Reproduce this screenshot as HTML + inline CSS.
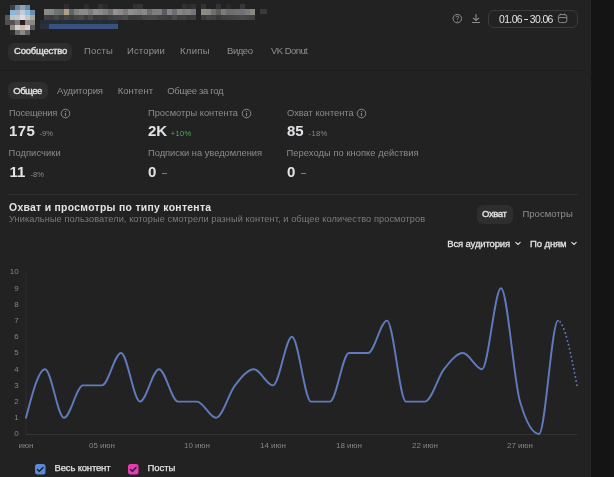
<!DOCTYPE html>
<html><head><meta charset="utf-8">
<style>
*{box-sizing:border-box;margin:0;padding:0}
body{will-change:transform}
html,body{width:614px;height:477px;overflow:hidden;background:#222222;font-family:"Liberation Sans",sans-serif;}
.abs{position:absolute;white-space:nowrap}
.strip{position:absolute;left:591px;top:0;width:23px;height:477px;background:#141414}
.sep{position:absolute;left:-10px;top:70px;width:601px;height:14px;border-top:1px solid #1d1d1d;border-right:1px solid #1d1d1d;border-top-right-radius:9px;-webkit-mask-image:linear-gradient(#000 40%,transparent)}
.edge{position:absolute;left:590px;top:0;width:1px;height:477px;background:#252525}
.pill{position:absolute;background:#2e2e2e;border-radius:6px}
.t1{font-size:10px;color:#e1e3e6;font-weight:700}
.tab{font-size:10px;color:#8f8f8f}
.lbl{font-size:9.3px;color:#8c8c8c}
.num{font-size:15px;color:#e1e3e6;font-weight:700}
.pct{font-size:7.5px;color:#8c8c8c;margin-top:1px}
</style></head><body>
<div class="strip"></div>
<div class="edge"></div>
<div class="sep"></div>
<div style="position:absolute;left:0;top:0;width:40px;height:40px;filter:blur(0.45px)"><div style="position:absolute;left:9.9px;top:5.0px;width:5.2px;height:5.2px;background:#3a4048"></div><div style="position:absolute;left:14.8px;top:5.0px;width:5.2px;height:5.2px;background:#6a84a0"></div><div style="position:absolute;left:19.7px;top:5.0px;width:5.2px;height:5.2px;background:#8ca4bc"></div><div style="position:absolute;left:24.6px;top:5.0px;width:5.2px;height:5.2px;background:#6888a8"></div><div style="position:absolute;left:9.9px;top:9.9px;width:5.2px;height:5.2px;background:#8cb8e0"></div><div style="position:absolute;left:14.8px;top:9.9px;width:5.2px;height:5.2px;background:#a0b0c0"></div><div style="position:absolute;left:19.7px;top:9.9px;width:5.2px;height:5.2px;background:#c8ccd0"></div><div style="position:absolute;left:24.6px;top:9.9px;width:5.2px;height:5.2px;background:#88c0e8"></div><div style="position:absolute;left:29.5px;top:9.9px;width:5.2px;height:5.2px;background:#6890b0"></div><div style="position:absolute;left:5.0px;top:14.8px;width:5.2px;height:5.2px;background:#585858"></div><div style="position:absolute;left:9.9px;top:14.8px;width:5.2px;height:5.2px;background:#b8c4cc"></div><div style="position:absolute;left:14.8px;top:14.8px;width:5.2px;height:5.2px;background:#c0c8d0"></div><div style="position:absolute;left:19.7px;top:14.8px;width:5.2px;height:5.2px;background:#dcdee0"></div><div style="position:absolute;left:24.6px;top:14.8px;width:5.2px;height:5.2px;background:#c4c8cc"></div><div style="position:absolute;left:29.5px;top:14.8px;width:5.2px;height:5.2px;background:#a8aaa8"></div><div style="position:absolute;left:5.0px;top:19.7px;width:5.2px;height:5.2px;background:#505050"></div><div style="position:absolute;left:9.9px;top:19.7px;width:5.2px;height:5.2px;background:#585050"></div><div style="position:absolute;left:14.8px;top:19.7px;width:5.2px;height:5.2px;background:#7a7878"></div><div style="position:absolute;left:19.7px;top:19.7px;width:5.2px;height:5.2px;background:#2a1a18"></div><div style="position:absolute;left:24.6px;top:19.7px;width:5.2px;height:5.2px;background:#8a8a8a"></div><div style="position:absolute;left:29.5px;top:19.7px;width:5.2px;height:5.2px;background:#888886"></div><div style="position:absolute;left:9.9px;top:24.6px;width:5.2px;height:5.2px;background:#8a8a8a"></div><div style="position:absolute;left:14.8px;top:24.6px;width:5.2px;height:5.2px;background:#d0d0d0"></div><div style="position:absolute;left:19.7px;top:24.6px;width:5.2px;height:5.2px;background:#d0b8a8"></div><div style="position:absolute;left:24.6px;top:24.6px;width:5.2px;height:5.2px;background:#d4d4d4"></div><div style="position:absolute;left:29.5px;top:24.6px;width:5.2px;height:5.2px;background:#5a5a5a"></div><div style="position:absolute;left:9.9px;top:29.5px;width:5.2px;height:5.2px;background:#2a2a2a"></div><div style="position:absolute;left:14.8px;top:29.5px;width:5.2px;height:5.2px;background:#6a6a6a"></div><div style="position:absolute;left:19.7px;top:29.5px;width:5.2px;height:5.2px;background:#888888"></div><div style="position:absolute;left:24.6px;top:29.5px;width:5.2px;height:5.2px;background:#606060"></div></div>
<div style="position:absolute;left:0;top:0;width:280px;height:40px;filter:blur(0.45px)"><div style="position:absolute;left:44.3px;top:9.3px;width:5.2px;height:5.3px;background:#8a8a88"></div><div style="position:absolute;left:44.3px;top:14.5px;width:5.2px;height:5.3px;background:#3f3f3f"></div><div style="position:absolute;left:49.2px;top:9.3px;width:5.2px;height:5.3px;background:#868686"></div><div style="position:absolute;left:49.2px;top:14.5px;width:5.2px;height:5.3px;background:#3c3c3c"></div><div style="position:absolute;left:54.1px;top:9.3px;width:5.2px;height:5.3px;background:#6c7474"></div><div style="position:absolute;left:54.1px;top:14.5px;width:5.2px;height:5.3px;background:#474747"></div><div style="position:absolute;left:59.0px;top:9.3px;width:5.2px;height:5.3px;background:#6a6e6e"></div><div style="position:absolute;left:59.0px;top:14.5px;width:5.2px;height:5.3px;background:#3a3a3a"></div><div style="position:absolute;left:63.9px;top:9.3px;width:5.2px;height:5.3px;background:#b0a088"></div><div style="position:absolute;left:63.9px;top:14.5px;width:5.2px;height:5.3px;background:#474747"></div><div style="position:absolute;left:63.9px;top:4.4px;width:5.2px;height:5.1px;background:#2d2d2d"></div><div style="position:absolute;left:68.8px;top:9.3px;width:5.2px;height:5.3px;background:#5a6868"></div><div style="position:absolute;left:68.8px;top:14.5px;width:5.2px;height:5.3px;background:#3e3e3e"></div><div style="position:absolute;left:73.7px;top:9.3px;width:5.2px;height:5.3px;background:#808080"></div><div style="position:absolute;left:73.7px;top:14.5px;width:5.2px;height:5.3px;background:#474747"></div><div style="position:absolute;left:78.6px;top:9.3px;width:5.2px;height:5.3px;background:#8a8a8a"></div><div style="position:absolute;left:78.6px;top:14.5px;width:5.2px;height:5.3px;background:#494949"></div><div style="position:absolute;left:83.5px;top:9.3px;width:5.2px;height:5.3px;background:#8a8a8a"></div><div style="position:absolute;left:83.5px;top:14.5px;width:5.2px;height:5.3px;background:#3c3c3c"></div><div style="position:absolute;left:83.5px;top:4.4px;width:5.2px;height:5.1px;background:#2c2c2c"></div><div style="position:absolute;left:88.4px;top:9.3px;width:5.2px;height:5.3px;background:#7a7a7a"></div><div style="position:absolute;left:88.4px;top:14.5px;width:5.2px;height:5.3px;background:#484848"></div><div style="position:absolute;left:93.3px;top:9.3px;width:5.2px;height:5.3px;background:#909090"></div><div style="position:absolute;left:93.3px;top:14.5px;width:5.2px;height:5.3px;background:#383838"></div><div style="position:absolute;left:98.2px;top:9.3px;width:5.2px;height:5.3px;background:#8a8a8a"></div><div style="position:absolute;left:98.2px;top:14.5px;width:5.2px;height:5.3px;background:#3a3a3a"></div><div style="position:absolute;left:98.2px;top:4.4px;width:5.2px;height:5.1px;background:#333333"></div><div style="position:absolute;left:103.1px;top:9.3px;width:5.2px;height:5.3px;background:#808080"></div><div style="position:absolute;left:103.1px;top:14.5px;width:5.2px;height:5.3px;background:#393939"></div><div style="position:absolute;left:103.1px;top:4.4px;width:5.2px;height:5.1px;background:#2a2a2a"></div><div style="position:absolute;left:108.0px;top:9.3px;width:5.2px;height:5.3px;background:#707070"></div><div style="position:absolute;left:108.0px;top:14.5px;width:5.2px;height:5.3px;background:#404040"></div><div style="position:absolute;left:112.9px;top:9.3px;width:5.2px;height:5.3px;background:#9a9090"></div><div style="position:absolute;left:112.9px;top:14.5px;width:5.2px;height:5.3px;background:#444444"></div><div style="position:absolute;left:117.8px;top:9.3px;width:5.2px;height:5.3px;background:#8a8a8a"></div><div style="position:absolute;left:117.8px;top:14.5px;width:5.2px;height:5.3px;background:#454545"></div><div style="position:absolute;left:122.7px;top:9.3px;width:5.2px;height:5.3px;background:#7a7a7a"></div><div style="position:absolute;left:122.7px;top:14.5px;width:5.2px;height:5.3px;background:#4a4a4a"></div><div style="position:absolute;left:127.6px;top:9.3px;width:5.2px;height:5.3px;background:#909090"></div><div style="position:absolute;left:127.6px;top:14.5px;width:5.2px;height:5.3px;background:#3c3c3c"></div><div style="position:absolute;left:132.5px;top:9.3px;width:5.2px;height:5.3px;background:#8a8a8a"></div><div style="position:absolute;left:132.5px;top:14.5px;width:5.2px;height:5.3px;background:#3b3b3b"></div><div style="position:absolute;left:132.5px;top:4.4px;width:5.2px;height:5.1px;background:#313131"></div><div style="position:absolute;left:137.4px;top:9.3px;width:5.2px;height:5.3px;background:#808488"></div><div style="position:absolute;left:137.4px;top:14.5px;width:5.2px;height:5.3px;background:#3e3e3e"></div><div style="position:absolute;left:137.4px;top:4.4px;width:5.2px;height:5.1px;background:#343434"></div><div style="position:absolute;left:142.3px;top:9.3px;width:5.2px;height:5.3px;background:#8a8a8a"></div><div style="position:absolute;left:142.3px;top:14.5px;width:5.2px;height:5.3px;background:#454545"></div><div style="position:absolute;left:147.2px;top:9.3px;width:5.2px;height:5.3px;background:#6d6d6d"></div><div style="position:absolute;left:147.2px;top:14.5px;width:5.2px;height:5.3px;background:#484848"></div><div style="position:absolute;left:152.1px;top:9.3px;width:5.2px;height:5.3px;background:#7e7e7d"></div><div style="position:absolute;left:152.1px;top:14.5px;width:5.2px;height:5.3px;background:#494949"></div><div style="position:absolute;left:157.0px;top:9.3px;width:5.2px;height:5.3px;background:#7f7f7c"></div><div style="position:absolute;left:157.0px;top:14.5px;width:5.2px;height:5.3px;background:#424242"></div><div style="position:absolute;left:161.9px;top:9.3px;width:5.2px;height:5.3px;background:#5b5b62"></div><div style="position:absolute;left:161.9px;top:14.5px;width:5.2px;height:5.3px;background:#404040"></div><div style="position:absolute;left:166.8px;top:9.3px;width:5.2px;height:5.3px;background:#848489"></div><div style="position:absolute;left:166.8px;top:14.5px;width:5.2px;height:5.3px;background:#3d3d3d"></div><div style="position:absolute;left:171.7px;top:9.3px;width:5.2px;height:5.3px;background:#6e6e70"></div><div style="position:absolute;left:171.7px;top:14.5px;width:5.2px;height:5.3px;background:#4a4a4a"></div><div style="position:absolute;left:176.6px;top:9.3px;width:5.2px;height:5.3px;background:#87878b"></div><div style="position:absolute;left:176.6px;top:14.5px;width:5.2px;height:5.3px;background:#3e3e3e"></div><div style="position:absolute;left:181.5px;top:9.3px;width:5.2px;height:5.3px;background:#7e7e7c"></div><div style="position:absolute;left:181.5px;top:14.5px;width:5.2px;height:5.3px;background:#414141"></div><div style="position:absolute;left:181.5px;top:4.4px;width:5.2px;height:5.1px;background:#313131"></div><div style="position:absolute;left:186.4px;top:9.3px;width:5.2px;height:5.3px;background:#828283"></div><div style="position:absolute;left:186.4px;top:14.5px;width:5.2px;height:5.3px;background:#3a3a3a"></div><div style="position:absolute;left:186.4px;top:4.4px;width:5.2px;height:5.1px;background:#2b2b2b"></div><div style="position:absolute;left:191.3px;top:9.3px;width:5.2px;height:5.3px;background:#74747c"></div><div style="position:absolute;left:191.3px;top:14.5px;width:5.2px;height:5.3px;background:#3c3c3c"></div><div style="position:absolute;left:191.3px;top:4.4px;width:5.2px;height:5.1px;background:#303030"></div><div style="position:absolute;left:201.1px;top:9.3px;width:5.2px;height:5.3px;background:#8b8b8b"></div><div style="position:absolute;left:201.1px;top:14.5px;width:5.2px;height:5.3px;background:#3b3b3b"></div><div style="position:absolute;left:201.1px;top:4.4px;width:5.2px;height:5.1px;background:#333333"></div><div style="position:absolute;left:206.0px;top:9.3px;width:5.2px;height:5.3px;background:#8a8a84"></div><div style="position:absolute;left:206.0px;top:14.5px;width:5.2px;height:5.3px;background:#444444"></div><div style="position:absolute;left:210.9px;top:9.3px;width:5.2px;height:5.3px;background:#6f6f71"></div><div style="position:absolute;left:210.9px;top:14.5px;width:5.2px;height:5.3px;background:#404040"></div><div style="position:absolute;left:215.8px;top:9.3px;width:5.2px;height:5.3px;background:#5c5c5a"></div><div style="position:absolute;left:215.8px;top:14.5px;width:5.2px;height:5.3px;background:#383838"></div><div style="position:absolute;left:215.8px;top:4.4px;width:5.2px;height:5.1px;background:#333333"></div><div style="position:absolute;left:220.7px;top:9.3px;width:5.2px;height:5.3px;background:#7c7c76"></div><div style="position:absolute;left:220.7px;top:14.5px;width:5.2px;height:5.3px;background:#3e3e3e"></div><div style="position:absolute;left:225.6px;top:9.3px;width:5.2px;height:5.3px;background:#6c6c6f"></div><div style="position:absolute;left:225.6px;top:14.5px;width:5.2px;height:5.3px;background:#404040"></div><div style="position:absolute;left:225.6px;top:4.4px;width:5.2px;height:5.1px;background:#2a2a2a"></div><div style="position:absolute;left:230.5px;top:9.3px;width:5.2px;height:5.3px;background:#6f6f6e"></div><div style="position:absolute;left:230.5px;top:14.5px;width:5.2px;height:5.3px;background:#434343"></div><div style="position:absolute;left:235.4px;top:9.3px;width:5.2px;height:5.3px;background:#727272"></div><div style="position:absolute;left:235.4px;top:14.5px;width:5.2px;height:5.3px;background:#464646"></div><div style="position:absolute;left:240.3px;top:9.3px;width:5.2px;height:5.3px;background:#727276"></div><div style="position:absolute;left:240.3px;top:14.5px;width:5.2px;height:5.3px;background:#494949"></div><div style="position:absolute;left:240.3px;top:4.4px;width:5.2px;height:5.1px;background:#363636"></div><div style="position:absolute;left:245.2px;top:9.3px;width:5.2px;height:5.3px;background:#7a7a78"></div><div style="position:absolute;left:245.2px;top:14.5px;width:5.2px;height:5.3px;background:#454545"></div><div style="position:absolute;left:250.1px;top:9.3px;width:5.2px;height:5.3px;background:#878784"></div><div style="position:absolute;left:250.1px;top:14.5px;width:5.2px;height:5.3px;background:#414141"></div><div style="position:absolute;left:260px;top:9.3px;width:6.5px;height:5.2px;background:#3a3a3a"></div><div style="position:absolute;left:40px;top:19.9px;width:78px;height:4.6px;background:#262c38"></div><div style="position:absolute;left:49px;top:24.4px;width:69px;height:4.6px;background:#37527e"></div><div style="position:absolute;left:40px;top:24.4px;width:9px;height:4.6px;background:#283040"></div></div>

<!-- header right -->
<svg class="abs" style="left:447px;top:8px" width="20" height="20" viewBox="0 0 20 20"><circle cx="10.3" cy="10.6" r="4.25" fill="none" stroke="#8a8a8a" stroke-width="1"/><path d="M9,9.4 a1.35,1.35 0 1 1 2.0,1.2 c-0.45,0.25 -0.6,0.45 -0.6,1.0" fill="none" stroke="#8a8a8a" stroke-width="0.95"/><circle cx="10.4" cy="13.3" r="0.55" fill="#8a8a8a"/></svg>
<svg class="abs" style="left:471px;top:13px" width="10" height="11" viewBox="0 0 10 11"><path d="M5,1 V7.5 M2,4.8 L5,7.5 L8,4.8 M1,9.5 H9" fill="none" stroke="#8a8a8a" stroke-width="1.1"/></svg>
<div class="abs" style="left:488px;top:10px;width:90px;height:18px;border:1px solid #3a3a3a;border-radius:6px"></div>
<div class="abs" style="left:499px;top:12.7px;font-size:10.4px;color:#e1e3e6;line-height:14px;letter-spacing:-0.6px">01.06</div><div class="abs" style="left:523.6px;top:19px;width:4.9px;height:1.1px;background:#d0d2d6"></div><div class="abs" style="left:529.8px;top:12.7px;font-size:10.4px;color:#e1e3e6;line-height:14px;letter-spacing:-0.6px">30.06</div>
<svg class="abs" style="left:550px;top:8px" width="24" height="20" viewBox="0 0 24 20"><rect x="8.4" y="6.6" width="8.4" height="8" rx="2" fill="none" stroke="#8a8a8a" stroke-width="1"/><path d="M8.4,9.6 H16.8 M10.6,5.6 V7.2 M14.6,5.6 V7.2" stroke="#8a8a8a" stroke-width="1"/></svg>

<!-- tabs row 1 -->
<div class="pill" style="left:8px;top:43px;width:64px;height:18px"></div>
<div class="abs t1" style="left:14px;top:44.4px;line-height:14px;font-size:9.5px;font-weight:400;letter-spacing:-0.22px;-webkit-text-stroke:0.35px #e1e3e6">Сообщество</div>
<div class="abs tab" style="left:84px;top:44.4px;line-height:14px;font-size:9.5px;letter-spacing:0.2px">Посты</div>
<div class="abs tab" style="left:127px;top:44.4px;line-height:14px;font-size:9.5px;letter-spacing:0.14px">Истории</div>
<div class="abs tab" style="left:180px;top:44.4px;line-height:14px;font-size:9.5px;letter-spacing:0.3px">Клипы</div>
<div class="abs tab" style="left:227px;top:44.4px;line-height:14px;font-size:9.5px;letter-spacing:-0.45px">Видео</div>
<div class="abs tab" style="left:271px;top:44.4px;line-height:14px;font-size:9.5px;letter-spacing:-0.56px">VK Donut</div>

<!-- tabs row 2 -->
<div class="pill" style="left:8px;top:82px;width:40px;height:17px"></div>
<div class="abs t1" style="left:13.3px;top:84px;line-height:14px;font-size:9.5px;font-weight:400;letter-spacing:-0.55px;-webkit-text-stroke:0.35px #e1e3e6">Общее</div>
<div class="abs tab" style="left:57px;top:84px;line-height:14px;font-size:9.5px;letter-spacing:-0.1px">Аудитория</div>
<div class="abs tab" style="left:117.8px;top:84px;line-height:14px;font-size:9.5px">Контент</div>
<div class="abs tab" style="left:167.3px;top:84px;line-height:14px;font-size:9.5px;letter-spacing:-0.33px">Общее за год</div>

<!-- stats -->
<div class="abs lbl" style="left:9px;top:107px;line-height:12px;letter-spacing:-0.18px">Посещения</div>
<svg class="abs" style="left:60.25px;top:108.0px" width="11" height="11" viewBox="0 0 11 11"><circle cx="5.5" cy="5.5" r="4.3" fill="none" stroke="#8a8a8a" stroke-width="1"/><circle cx="5.5" cy="3.4" r="0.65" fill="#8a8a8a"/><path d="M5.5,4.8 V8" stroke="#8a8a8a" stroke-width="1.1"/></svg>
<div class="abs num" style="left:9px;top:122px;line-height:17px;letter-spacing:0.4px">175</div>
<div class="abs pct" style="left:39.6px;top:128px;line-height:10px">-9%</div>

<div class="abs lbl" style="left:148px;top:107px;line-height:12px">Просмотры контента</div>
<svg class="abs" style="left:241.3px;top:108.0px" width="11" height="11" viewBox="0 0 11 11"><circle cx="5.5" cy="5.5" r="4.3" fill="none" stroke="#8a8a8a" stroke-width="1"/><circle cx="5.5" cy="3.4" r="0.65" fill="#8a8a8a"/><path d="M5.5,4.8 V8" stroke="#8a8a8a" stroke-width="1.1"/></svg>
<div class="abs num" style="left:148px;top:122px;line-height:17px">2K</div>
<div class="abs pct" style="left:170.7px;top:128px;line-height:10px;color:#4bb34b;letter-spacing:0.4px">+10%</div>

<div class="abs lbl" style="left:287px;top:107px;line-height:12px">Охват контента</div>
<svg class="abs" style="left:356.0px;top:108.0px" width="11" height="11" viewBox="0 0 11 11"><circle cx="5.5" cy="5.5" r="4.3" fill="none" stroke="#8a8a8a" stroke-width="1"/><circle cx="5.5" cy="3.4" r="0.65" fill="#8a8a8a"/><path d="M5.5,4.8 V8" stroke="#8a8a8a" stroke-width="1.1"/></svg>
<div class="abs num" style="left:287px;top:122px;line-height:17px">85</div>
<div class="abs pct" style="left:308.6px;top:128px;line-height:10px;letter-spacing:0.35px">-18%</div>

<div class="abs lbl" style="left:8.6px;top:147px;line-height:12px;letter-spacing:0.1px">Подписчики</div>
<div class="abs num" style="left:9.6px;top:163px;line-height:17px">11</div>
<div class="abs pct" style="left:30.5px;top:169px;line-height:10px">-8%</div>

<div class="abs lbl" style="left:148px;top:147px;line-height:12px">Подписки на уведомления</div>
<div class="abs num" style="left:148px;top:163px;line-height:17px">0</div>
<div class="abs" style="left:161.5px;top:173.3px;width:5.4px;height:1px;background:#7c7c7c"></div>

<div class="abs lbl" style="left:286.6px;top:147px;line-height:12px;letter-spacing:0.07px">Переходы по кнопке действия</div>
<div class="abs num" style="left:287px;top:163px;line-height:17px">0</div>
<div class="abs" style="left:300.8px;top:173.3px;width:5.4px;height:1px;background:#7c7c7c"></div>

<!-- chart header -->
<div class="abs" style="left:8px;top:194px;width:570px;height:1px;background:#2f2f2f"></div>
<div class="abs" style="left:9px;top:200.5px;font-size:10.4px;font-weight:700;color:#e1e3e6;line-height:14px;letter-spacing:0.3px">Охват и просмотры по типу контента</div>
<div class="abs" style="left:9px;top:213px;font-size:9.2px;color:#7c7c7c;line-height:12px;letter-spacing:0.09px">Уникальные пользователи, которые смотрели разный контент, и общее количество просмотров</div>
<div class="pill" style="left:477px;top:205px;width:36px;height:19px"></div>
<div class="abs t1" style="left:482px;top:207px;font-size:9.5px;line-height:14px;font-weight:400;letter-spacing:-0.4px;-webkit-text-stroke:0.35px #e1e3e6">Охват</div>
<div class="abs tab" style="left:522.5px;top:207px;font-size:9.5px;line-height:14px">Просмотры</div>

<div class="abs t1" style="left:447.3px;top:237px;font-size:9.5px;line-height:14px;font-weight:400;letter-spacing:-0.15px;-webkit-text-stroke:0.3px #e1e3e6">Вся аудитория</div>
<div class="abs t1" style="left:530px;top:237px;font-size:9.5px;line-height:14px;font-weight:400;letter-spacing:-0.1px;-webkit-text-stroke:0.3px #e1e3e6">По дням</div>
<svg class="abs" style="left:514px;top:241px" width="8" height="5" viewBox="0 0 8 5"><path d="M1.5,1.2 L4,3.5 L6.5,1.2" fill="none" stroke="#e1e3e6" stroke-width="1.1"/></svg>
<svg class="abs" style="left:570px;top:241px" width="8" height="5" viewBox="0 0 8 5"><path d="M1.5,1.2 L4,3.5 L6.5,1.2" fill="none" stroke="#e1e3e6" stroke-width="1.1"/></svg>

<!-- chart -->
<svg class="abs" style="left:0;top:0" width="614" height="477" viewBox="0 0 614 477">
<line x1="26" y1="272" x2="26" y2="434" stroke="#2c2c2c" stroke-width="1"/>
<line x1="26" y1="434.5" x2="577" y2="434.5" stroke="#343434" stroke-width="1"/>
<g font-family="Liberation Sans" font-size="8" fill="#858585" text-anchor="end">
<text x="18.6" y="274.4">10</text><text x="18.6" y="290.6">9</text><text x="18.6" y="306.8">8</text><text x="18.6" y="323.0">7</text><text x="18.6" y="339.2">6</text><text x="18.6" y="355.4">5</text><text x="18.6" y="371.6">4</text><text x="18.6" y="387.8">3</text><text x="18.6" y="404.0">2</text><text x="18.6" y="420.2">1</text><text x="18.6" y="436.4">0</text>
</g>
<g font-family="Liberation Sans" font-size="8" fill="#858585" text-anchor="middle">
<text x="26" y="447.5">июн</text><text x="102" y="447.5">05 июн</text><text x="197" y="447.5">10 июн</text><text x="273" y="447.5">14 июн</text><text x="349" y="447.5">18 июн</text><text x="425" y="447.5">22 июн</text><text x="520" y="447.5">27 июн</text>
</g>
<path d="M26.00,417.80C32.33,393.50 38.67,369.20 45.00,369.20C51.33,369.20 57.67,417.80 64.00,417.80C70.33,417.80 76.67,385.40 83.00,385.40C89.33,385.40 95.67,385.40 102.00,385.40C108.33,385.40 114.67,353.00 121.00,353.00C127.33,353.00 133.67,401.60 140.00,401.60C146.33,401.60 152.67,369.20 159.00,369.20C165.33,369.20 171.67,401.60 178.00,401.60C184.33,401.60 190.67,401.60 197.00,401.60C203.33,401.60 209.67,417.80 216.00,417.80C222.33,417.80 228.67,393.50 235.00,385.40C241.33,377.30 247.67,369.20 254.00,369.20C260.33,369.20 266.67,385.40 273.00,385.40C279.33,385.40 285.67,336.80 292.00,336.80C298.33,336.80 304.67,401.60 311.00,401.60C317.33,401.60 323.67,401.60 330.00,401.60C336.33,401.60 342.67,353.00 349.00,353.00C355.33,353.00 361.67,353.00 368.00,353.00C374.33,353.00 380.67,320.60 387.00,320.60C393.33,320.60 399.67,401.60 406.00,401.60C412.33,401.60 418.67,401.60 425.00,401.60C431.33,401.60 437.67,377.30 444.00,369.20C450.33,361.10 456.67,353.00 463.00,353.00C469.33,353.00 475.67,369.20 482.00,369.20C488.33,369.20 494.67,288.20 501.00,288.20C507.33,288.20 513.67,380.00 520.00,401.60C526.33,423.20 532.67,434.00 539.00,434.00C545.33,434.00 551.67,320.60 558.00,320.60" fill="none" stroke="#607bbd" stroke-width="1.9" stroke-linejoin="round" stroke-linecap="round"/>
<path d="M558.00,320.60C564.33,320.60 570.67,353.00 577.00,385.40" fill="none" stroke="#607bbd" stroke-width="1.9" stroke-dasharray="0.01 4.1" stroke-dashoffset="-2.5" stroke-linecap="round"/>
</svg>

<!-- legend -->
<svg class="abs" style="left:34.8px;top:464.1px" width="11" height="11" viewBox="0 0 11 11"><rect x="0" y="0" width="10.5" height="10.5" rx="2.5" fill="#5d8ad6"/><path d="M2.4,5.4 L4.4,7.2 L8,3.5" fill="none" stroke="#1d1f2a" stroke-width="1.4" stroke-linecap="round" stroke-linejoin="round"/></svg>
<div class="abs" style="left:54.6px;top:460.8px;font-size:9.5px;color:#e1e3e6;line-height:13px;letter-spacing:-0.18px;-webkit-text-stroke:0.25px #e1e3e6">Весь контент</div>
<svg class="abs" style="left:127.7px;top:464.1px" width="11" height="11" viewBox="0 0 11 11"><rect x="0" y="0" width="10.5" height="10.5" rx="2.5" fill="#e33db0"/><path d="M2.4,5.4 L4.4,7.2 L8,3.5" fill="none" stroke="#1d1f2a" stroke-width="1.4" stroke-linecap="round" stroke-linejoin="round"/></svg>
<div class="abs" style="left:147.4px;top:460.8px;font-size:9.5px;color:#e1e3e6;line-height:13px;-webkit-text-stroke:0.25px #e1e3e6">Посты</div>
</body></html>
